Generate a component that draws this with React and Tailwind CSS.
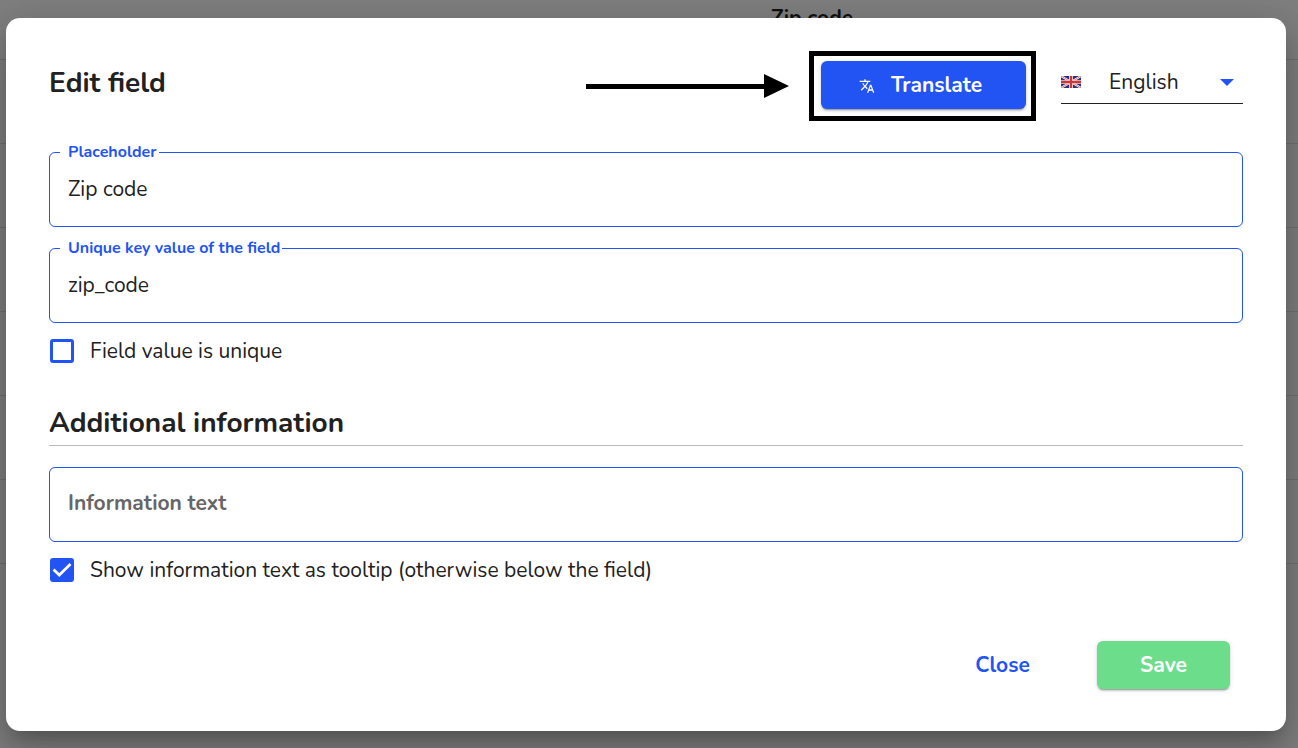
import { useState } from 'react';
import { MdTranslate } from 'react-icons/md';

const rows = ['Zip code', '', '', '', '', '', ''];

function FlagUK() {
  return (
    <svg viewBox="0 0 60 36" className="w-5 h-3 shrink-0" preserveAspectRatio="none" aria-hidden="true">
      <rect width="60" height="36" fill="#29337a" />
      <path d="M0 0L60 36M60 0L0 36" stroke="#fff" strokeWidth="6" />
      <path d="M0 0L30 18M60 36L30 18M60 0L30 18M0 36L30 18" stroke="#d03433" strokeWidth="2" />
      <path d="M30 0V36M0 18H60" stroke="#fff" strokeWidth="11" />
      <path d="M30 0V36M0 18H60" stroke="#d03433" strokeWidth="7" />
    </svg>
  );
}

function Arrow() {
  return (
    <svg viewBox="0 0 203 26" className="w-[203px] h-[26px] shrink-0" aria-hidden="true">
      <path d="M0 11H178V1L203 13L178 25V16H0Z" fill="#000" />
    </svg>
  );
}

function TextField({ id, label, value, onChange }) {
  return (
    <div className="relative">
      <input id={id} value={value} onChange={e => onChange(e.target.value)}
        className="block w-full h-[75px] rounded-md border border-[#2254f4] bg-white px-[18px] pb-0.5 text-[21px] text-[#212121] outline-none" />
      <label htmlFor={id} className="absolute left-[11px] -top-2.5 bg-white pl-2 pr-0.5 text-base leading-5 font-bold text-[#2254f4]">{label}</label>
    </div>
  );
}

function Checkbox({ id, label, checked, onChange }) {
  return (
    <div className="flex items-center gap-4 pl-px">
      <div className="grid size-6 shrink-0">
        <input id={id} type="checkbox" checked={checked} onChange={e => onChange(e.target.checked)}
          className="col-start-1 row-start-1 size-6 appearance-none rounded-[3px] border-[3px] border-[#2254f4] checked:bg-[#2254f4]" />
        {checked && (
          <svg viewBox="0 0 24 24" className="pointer-events-none col-start-1 row-start-1 size-6" fill="none" stroke="#fff" strokeWidth="2.7" aria-hidden="true">
            <path d="M3.500 11.500L9.300 17L20.500 6" />
          </svg>
        )}
      </div>
      <label htmlFor={id} className="text-[21px] leading-6 text-[#212121]">{label}</label>
    </div>
  );
}

export default function App() {
  const [placeholder, setPlaceholder] = useState('Zip code');
  const [uniqueKey, setUniqueKey] = useState('zip_code');
  const [isUnique, setIsUnique] = useState(false);
  const [info, setInfo] = useState('');
  const [asTooltip, setAsTooltip] = useState(true);
  const [language, setLanguage] = useState('en');

  return (
    <div className="relative min-h-screen overflow-hidden bg-[#7f7f7f] font-[Nunito,Lato,sans-serif]">
      {/* Field list behind the dialog */}
      <div className="absolute inset-0 overflow-hidden" aria-hidden="true">
        <div className="-mt-6">
          {rows.map((row, i) => (
            <div key={i} className="flex h-[84px] items-center border-b border-[#707070] pt-0.5 pl-[771px] text-[21px] font-bold text-[#111111]">{row}</div>
          ))}
        </div>
      </div>

      {/* Dialog */}
      <div className="relative pt-[18px] pr-3 pb-[17px] pl-[6px]">
        <div role="dialog" aria-labelledby="dialog-title"
          className="rounded-[14px] bg-white px-[43px] pt-[33px] pb-[42px] shadow-[0_11px_15px_-7px_rgba(0,0,0,0.2),0_24px_38px_3px_rgba(0,0,0,0.14),0_9px_46px_8px_rgba(0,0,0,0.12)]">
          <div className="flex items-center">
            <h1 id="dialog-title" className="mb-1.5 mr-auto text-[28px] leading-8 font-bold text-[#212121]">Edit field</h1>
            <Arrow />
            <div className="ml-5 border-[5px] border-black pt-[5px] pr-[5px] pb-[7px] pl-[7px]">
              <button type="button" className="flex h-12 w-[205px] items-center justify-center gap-4 rounded-md bg-[#2254f4] pt-0.5 pr-1.5 text-[21px] font-bold text-white shadow-[0_3px_1px_-2px_rgba(0,0,0,0.2),0_2px_2px_0_rgba(0,0,0,0.14),0_1px_5px_0_rgba(0,0,0,0.12)]">
                <MdTranslate className="size-4" />
                Translate
              </button>
            </div>
            <div className="ml-[25px] mb-2 grid h-[44px] w-[182px] items-center border-b border-[#212121]">
              <div className="col-start-1 row-start-1"><FlagUK /></div>
              <select aria-label="Language" value={language} onChange={e => setLanguage(e.target.value)}
                className="col-start-1 row-start-1 w-full appearance-none bg-transparent pt-0.5 pl-12 text-[21px] text-[#212121] outline-none">
                <option value="en">English</option>
              </select>
              <svg viewBox="0 0 14 8" className="pointer-events-none col-start-1 row-start-1 mr-[9px] h-2 w-[14px] justify-self-end" aria-hidden="true">
                <path d="M0 1H14L7 8Z" fill="#2254f4" />
              </svg>
            </div>
          </div>

          <div className="mt-[31px] flex flex-col gap-[21px]">
            <TextField id="placeholder" label="Placeholder" value={placeholder} onChange={setPlaceholder} />
            <TextField id="unique-key" label="Unique key value of the field" value={uniqueKey} onChange={setUniqueKey} />
          </div>
          <div className="mt-4">
            <Checkbox id="is-unique" label="Field value is unique" checked={isUnique} onChange={setIsUnique} />
          </div>

          <h2 className="mt-11 border-b border-[#b9b9bf] pb-[6px] text-[28px] leading-8 font-bold text-[#212121]">Additional information</h2>
          <input aria-label="Information text" placeholder="Information text" value={info} onChange={e => setInfo(e.target.value)}
            className="mt-[21px] block w-full h-[75px] rounded-md border border-[#2254f4] bg-white px-[18px] pb-1 text-[21px] text-[#212121] outline-none placeholder:font-bold placeholder:text-[#666666]" />
          <div className="mt-4">
            <Checkbox id="as-tooltip" label="Show information text as tooltip (otherwise below the field)" checked={asTooltip} onChange={setAsTooltip} />
          </div>

          <div className="mt-[59px] flex justify-end gap-6 pr-[13px]">
            <button type="button" className="h-12 w-[141px] rounded-md pt-0.5 text-[21px] font-bold text-[#2254f4]">Close</button>
            <button type="button" className="h-12 w-[133px] rounded-md bg-[#6cdd8b] pt-0.5 text-[21px] font-bold text-white shadow-[0_3px_1px_-2px_rgba(0,0,0,0.2),0_2px_2px_0_rgba(0,0,0,0.14),0_1px_5px_0_rgba(0,0,0,0.12)]">Save</button>
          </div>
        </div>
      </div>
    </div>
  );
}
